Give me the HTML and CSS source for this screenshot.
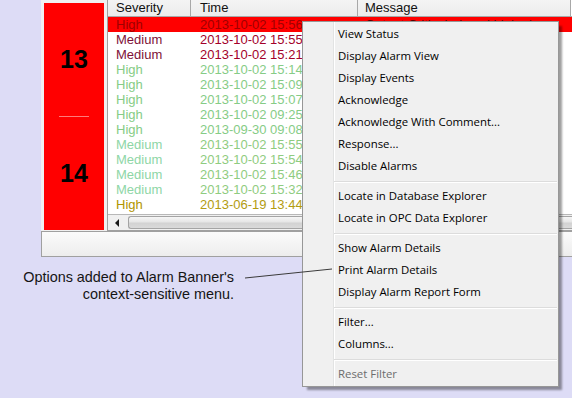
FILE: index.html
```html
<!DOCTYPE html>
<html>
<head>
<meta charset="utf-8">
<title>Alarm Banner</title>
<link rel="stylesheet" href="styles.css">
</head>
<body>
<div class="window">
  <div class="main">
    <div class="banner">
      <div class="count">13</div>
      <div class="divider"></div>
      <div class="count">14</div>
    </div>
    <div class="list">
      <div class="thead">
        <div class="th c1">Severity</div>
        <div class="th c2">Time</div>
        <div class="th c3">Message</div>
      </div>
      <div class="rows">
        <div class="row sel"><span class="c1">High</span><span class="c2">2013-10-02 15:56</span><span class="c3">Output Critical - Level high alarm</span></div>
        <div class="row med-red"><span class="c1">Medium</span><span class="c2">2013-10-02 15:55</span><span class="c3"></span></div>
        <div class="row med-red"><span class="c1">Medium</span><span class="c2">2013-10-02 15:21</span><span class="c3"></span></div>
        <div class="row hi-green"><span class="c1">High</span><span class="c2">2013-10-02 15:14</span><span class="c3"></span></div>
        <div class="row hi-green"><span class="c1">High</span><span class="c2">2013-10-02 15:09</span><span class="c3"></span></div>
        <div class="row hi-green"><span class="c1">High</span><span class="c2">2013-10-02 15:07</span><span class="c3"></span></div>
        <div class="row hi-green"><span class="c1">High</span><span class="c2">2013-10-02 09:25</span><span class="c3"></span></div>
        <div class="row hi-green"><span class="c1">High</span><span class="c2">2013-09-30 09:08</span><span class="c3"></span></div>
        <div class="row med-green"><span class="c1">Medium</span><span class="c2">2013-10-02 15:55</span><span class="c3"></span></div>
        <div class="row med-green"><span class="c1">Medium</span><span class="c2">2013-10-02 15:54</span><span class="c3"></span></div>
        <div class="row med-green"><span class="c1">Medium</span><span class="c2">2013-10-02 15:46</span><span class="c3"></span></div>
        <div class="row med-green"><span class="c1">Medium</span><span class="c2">2013-10-02 15:32</span><span class="c3"></span></div>
        <div class="row hi-olive"><span class="c1">High</span><span class="c2">2013-06-19 13:44</span><span class="c3"></span></div>
      </div>
      <div class="hscroll">
        <div class="arrow"><span class="tri"></span></div>
        <div class="thumb"></div>
      </div>
    </div>
  </div>
  <div class="status"></div>
</div>
<p class="callout">Options added to Alarm Banner's<br>context-sensitive menu.</p>

<div class="menu">
  <div class="item">View Status</div>
  <div class="item">Display Alarm View</div>
  <div class="item">Display Events</div>
  <div class="item">Acknowledge</div>
  <div class="item">Acknowledge With Comment...</div>
  <div class="item">Response...</div>
  <div class="item">Disable Alarms</div>
  <div class="sep"></div>
  <div class="item">Locate in Database Explorer</div>
  <div class="item">Locate in OPC Data Explorer</div>
  <div class="sep"></div>
  <div class="item">Show Alarm Details</div>
  <div class="item">Print Alarm Details</div>
  <div class="item">Display Alarm Report Form</div>
  <div class="sep"></div>
  <div class="item">Filter...</div>
  <div class="item">Columns...</div>
  <div class="sep"></div>
  <div class="item disabled">Reset Filter</div>
</div>

<svg class="leader" width="572" height="398" viewBox="0 0 572 398">
  <line x1="245" y1="278" x2="332" y2="269" stroke="#3a3a3a" stroke-width="1"/>
</svg>
</body>
</html>
```

FILE: styles.css
```css
html, body {
  margin: 0;
  padding: 0;
}
body {
  width: 572px;
  height: 398px;
  overflow: hidden;
  position: relative;
  background: #dddcf6;
  font-family: "Liberation Sans", Arial, sans-serif;
}

.window {
  margin-left: 41px;
  width: 560px;
  background: #f0f0f0;
  display: flex;
  flex-direction: column;
}

.main {
  display: flex;
  height: 231px;
}

.banner {
  width: 60px;
  margin: 3px 3px 1px 3px;
  background: #ff0000;
  display: flex;
  flex-direction: column;
  align-items: center;
}
.count {
  flex: 1;
  display: flex;
  align-items: center;
  justify-content: center;
  font-weight: bold;
  font-size: 25px;
  color: #000;
}
.divider {
  width: 30px;
  height: 1px;
  background: #ff7a7a;
}

.list {
  flex: 1;
  display: flex;
  flex-direction: column;
  background: #fff;
  border-left: 1px solid #a0a0a0;
  border-bottom: 1px solid #a0a0a0;
}

.thead {
  display: flex;
  height: 16px;
  border-bottom: 1px solid #a8a8a8;
  background: #fff;
}
.th {
  box-sizing: border-box;
  height: 16px;
  line-height: 16px;
  font-size: 13px;
  color: #111;
  background: linear-gradient(#f4f4f4, #ececec);
  border-right: 1px solid #a8a8a8;
  white-space: nowrap;
}

.c1 { width: 83px; padding-left: 8px; box-sizing: border-box; flex: none; }
.c2 { width: 167px; padding-left: 9px; box-sizing: border-box; flex: none; }
.c3 { width: 213px; padding-left: 7px; box-sizing: border-box; flex: none; }

.rows {
  height: 197px;
}
.row {
  display: flex;
  height: 15px;
  line-height: 15px;
  font-size: 13px;
  white-space: nowrap;
}
.row span {
  overflow: hidden;
}
.row.sel { background: #ff0000; color: #a00000; }
.row.sel .c3 { color: #5a0000; }
.row.med-red .c1 { color: #7e1038; }
.row.med-red .c2 { color: #a3002a; }
.row.hi-green { color: #86cc86; }
.row.med-green .c1 { color: #8ed6a6; }
.row.med-green .c2 { color: #8fcc80; }
.row.hi-olive .c1 { color: #b09400; }
.row.hi-olive .c2 { color: #b29c10; }

.hscroll {
  height: 16px;
  box-sizing: border-box;
  border-top: 1px solid #b8b8b8;
  background: #f0f0f0;
  display: flex;
  padding: 1px 0 1px 0;
}
.arrow {
  width: 18px;
  display: flex;
  align-items: center;
  justify-content: center;
}
.tri {
  width: 0;
  height: 0;
  border-top: 4px solid transparent;
  border-bottom: 4px solid transparent;
  border-right: 4px solid #1a1a1a;
}
.thumb {
  flex: 1;
  margin-left: 2px;
  border: 1px solid #a4a4a4;
  border-right: none;
  border-radius: 3px 0 0 3px;
  background: linear-gradient(#f6f6f6, #e6e6e6 45%, #d2d2d2 55%, #dadada);
}

.status {
  height: 24px;
  border: 1px solid #a0a0a0;
  border-right: none;
  background: linear-gradient(#fbfbfb, #ededed);
}

.callout {
  margin: 12px 0 0 0;
  width: 234px;
  text-align: right;
  font-size: 14.4px;
  line-height: 17px;
  color: #151515;
}

.leader {
  position: absolute;
  left: 0;
  top: 0;
  pointer-events: none;
}

.menu {
  position: absolute;
  left: 302px;
  top: 21px;
  width: 257px;
  box-sizing: border-box;
  border: 1px solid #979797;
  padding: 1px 0;
  background:
    linear-gradient(to right, transparent 30px, #e2e3e3 30px, #e2e3e3 31px, #ffffff 31px, #ffffff 32px, transparent 32px),
    #f0f0f0;
  box-shadow: 4px 4px 2px -1px rgba(0, 0, 0, 0.38);
  font-family: "Open Sans", "Noto Sans", sans-serif;
  font-size: 11.4px;
  color: #000;
}
.item {
  height: 22px;
  line-height: 22px;
  padding-left: 35px;
  white-space: nowrap;
}
.item.disabled {
  color: #6d6d6d;
}
.sep {
  height: 8px;
  margin: 0 1px 0 31px;
  background: linear-gradient(transparent 4px, #dcdcdc 4px, #dcdcdc 5px, #ffffff 5px, #ffffff 6px, transparent 6px);
}
```
